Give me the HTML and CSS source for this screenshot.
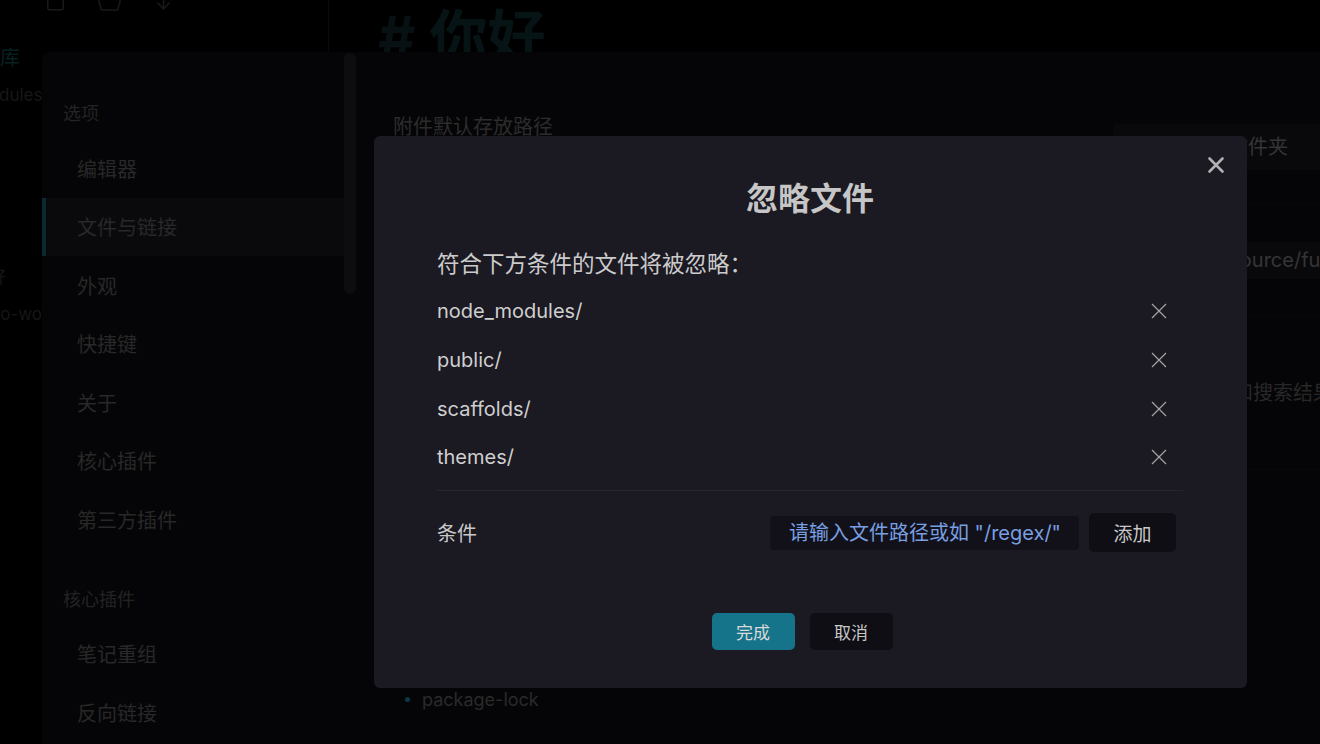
FILE: index.html
```html
<!DOCTYPE html>
<html lang="zh-CN">
<head>
<meta charset="utf-8">
<title>忽略文件</title>
<link rel="stylesheet" href="styles.css">
</head>
<body>
<div class="app">
  <aside class="explorer">
    <div class="ribbon-icons">
      <span class="ribbon-icon"><svg width="17" height="22" viewBox="0 0 17 22"><rect x="0.75" y="0.75" width="15.5" height="20" rx="1.5" fill="none" stroke="#1a1a1a" stroke-width="1.5"/></svg></span>
      <span class="ribbon-icon"><svg width="23" height="22" viewBox="0 0 23 22"><path d="M1 1h21v12l-2.5 8H3.5L1 13z" fill="none" stroke="#1a1a1a" stroke-width="1.5" stroke-linejoin="round"/></svg></span>
      <span class="ribbon-icon"><svg width="15" height="22" viewBox="0 0 15 22"><path d="M7.5 1v19M2 14l5.5 6 5.5-6" fill="none" stroke="#1a1a1a" stroke-width="1.5" stroke-linecap="round" stroke-linejoin="round"/></svg></span>
    </div>
    <div class="tree">
      <div class="vault">知识库</div>
      <div class="tree-item">node_modules</div>
      <div class="tree-item">public</div>
      <div class="tree-item">scaffolds</div>
      <div class="tree-item">source</div>
      <div class="tree-item depth-1">_drafts</div>
      <div class="tree-item depth-2">你好</div>
      <div class="tree-item depth-2">hello-world</div>
    </div>
  </aside>
  <main class="editor">
    <h1 class="note-title"><span class="hash">#</span> 你好</h1>
  </main>
</div>

<div class="settings">
  <div class="settings-nav-wrap">
    <nav class="settings-nav">
      <div class="nav-header">选项</div>
      <div class="nav-item">编辑器</div>
      <div class="nav-item active">文件与链接</div>
      <div class="nav-item">外观</div>
      <div class="nav-item">快捷键</div>
      <div class="nav-item">关于</div>
      <div class="nav-item">核心插件</div>
      <div class="nav-item">第三方插件</div>
      <div class="nav-header">核心插件</div>
      <div class="nav-item">笔记重组</div>
      <div class="nav-item">反向链接</div>
    </nav>
    <div class="nav-scroll"><div class="nav-thumb"></div></div>
  </div>
  <section class="settings-content">
    <div class="setting-item first">
      <div class="setting-info">
        <div class="setting-name">附件默认存放路径</div>
        <div class="setting-desc">新添加的附件存放的位置。</div>
        <div class="setting-desc">附件文件夹路径。</div>
      </div>
      <div class="setting-control"><div class="dropdown">指定的附件文件夹</div></div>
    </div>
    <div class="setting-item">
      <div class="setting-info">
        <div class="setting-name">附件文件夹路径</div>
        <div class="setting-desc">放置附件的位置。</div>
        <div class="setting-desc">请输入路径。</div>
      </div>
      <div class="setting-control"><div class="text-field">blog/hexo/source/fu</div></div>
    </div>
    <div class="setting-item">
      <div class="setting-info">
        <div class="setting-name">已忽略的文件</div>
        <div class="setting-desc">被忽略的文件不会出现在快速切换</div>
        <div class="setting-desc">关系图谱和反向链接中</div>
        <div class="setting-desc">也不会出现在搜索结果里</div>
        <div class="setting-desc">以及未链接提及中。</div>
      </div>
      <div class="setting-control"><div class="control-text">将在关系图谱和搜索结果中隐藏</div></div>
    </div>
    <div class="setting-item block">
      <div class="setting-name">排除的文件</div>
      <div class="setting-desc">以下文件已被排除。</div>
      <ul class="excluded-list">
        <li>node_modules</li>
        <li>public</li>
        <li>scaffolds</li>
        <li>themes</li>
        <li>package-lock</li>
      </ul>
    </div>
  </section>
</div>

<div class="modal">
  <button class="modal-close" aria-label="关闭"><svg width="18" height="18" viewBox="0 0 18 18"><path d="M2.5 2.5L15.5 15.5M15.5 2.5L2.5 15.5" stroke="#b2b2b2" stroke-width="2.6" stroke-linecap="round"/></svg></button>
  <h2 class="modal-title">忽略文件</h2>
  <p class="modal-desc">符合下方条件的文件将被忽略：</p>
  <ul class="filter-list">
    <li><span>node_modules/</span><button class="remove"><svg width="16" height="16" viewBox="0 0 16 16"><path d="M1 1L15 15M15 1L1 15" stroke="#a2a2a2" stroke-width="1.3"/></svg></button></li>
    <li><span>public/</span><button class="remove"><svg width="16" height="16" viewBox="0 0 16 16"><path d="M1 1L15 15M15 1L1 15" stroke="#a2a2a2" stroke-width="1.3"/></svg></button></li>
    <li><span>scaffolds/</span><button class="remove"><svg width="16" height="16" viewBox="0 0 16 16"><path d="M1 1L15 15M15 1L1 15" stroke="#a2a2a2" stroke-width="1.3"/></svg></button></li>
    <li><span>themes/</span><button class="remove"><svg width="16" height="16" viewBox="0 0 16 16"><path d="M1 1L15 15M15 1L1 15" stroke="#a2a2a2" stroke-width="1.3"/></svg></button></li>
  </ul>
  <div class="modal-setting">
    <div class="modal-setting-name">条件</div>
    <div class="modal-setting-control">
      <input class="filter-input" type="text" placeholder="请输入文件路径或如 &quot;/regex/&quot; 的正则表达式">
      <button class="btn">添加</button>
    </div>
  </div>
  <div class="modal-buttons">
    <button class="btn btn-cta">完成</button>
    <button class="btn">取消</button>
  </div>
</div>
</body>
</html>
```

FILE: styles.css
```css
* { box-sizing: border-box; }
html, body { margin: 0; padding: 0; }
body {
  width: 1320px;
  height: 744px;
  overflow: hidden;
  position: relative;
  background: #000;
  font-family: Inter, "Noto Sans CJK SC", sans-serif;
}

/* background workspace */
.app { display: flex; height: 744px; overflow: hidden; }
.explorer { width: 329px; flex: none; border-right: 1px solid #0a0a0a; overflow: hidden; }
.ribbon-icons { display: flex; align-items: flex-end; height: 12px; padding-left: 28px; overflow: hidden; }
.ribbon-icon { width: 54px; display: flex; justify-content: center; }
.ribbon-icon svg { display: block; margin-bottom: 1px; }
.tree { margin-left: -75px; padding-top: 28px; white-space: nowrap; }
.vault { height: 36.5px; line-height: 36.5px; padding-left: 35px; font-size: 20px; color: #082022; }
.tree-item { height: 36.5px; line-height: 36.5px; font-size: 17px; color: #171717; }
.tree-item.depth-1 { padding-left: 19px; }
.tree-item.depth-2 { padding-left: 47px; }

.editor { flex: 1; }
.note-title {
  margin: 0;
  padding: 5px 0 0 49px;
  font-size: 58px;
  line-height: 64px;
  font-weight: 700;
  color: #071415;
}
.note-title .hash { color: #071012; }

/* settings panel (behind overlay) */
.settings {
  position: absolute;
  left: 42px;
  top: 52px;
  width: 1368px;
  height: 760px;
  background: #050507;
  border-radius: 8px;
  display: flex;
}
.settings-nav-wrap { display: flex; width: 314px; flex: none; }
.settings-nav { width: 302px; padding-top: 11px; }
.nav-header { padding: 40px 0 14px 21px; font-size: 18px; line-height: 22px; color: #232323; }
.nav-item { height: 58.5px; display: flex; align-items: center; padding-left: 35px; font-size: 20px; color: #282828; }
.nav-item.active { background: #0a0a0d; box-shadow: inset 4px 0 0 #0a2a31; }
.nav-scroll { width: 12px; padding-top: 1px; }
.nav-thumb { height: 241px; border-radius: 6px; background: #0d0d10; }

.settings-content { flex: 1; padding: 39px 37px 0 37px; }
.setting-item { display: flex; align-items: center; padding: 22px 0; border-top: 1px solid #08080a; }
.setting-item.first { border-top: none; }
.setting-item.block { display: block; }
.setting-info { flex: 1; }
.setting-name { font-size: 20px; line-height: 28px; color: #2c2c2c; }
.setting-desc { font-size: 15px; line-height: 20px; color: #1c1c1c; }
.setting-control { width: 260px; flex: none; }
.dropdown { height: 46px; line-height: 46px; padding-left: 15px; border-radius: 4px; background: #09090c; font-size: 20px; color: #353535; white-space: nowrap; overflow: hidden; }
.text-field { height: 37px; line-height: 37px; padding-left: 15px; border-radius: 4px; background: #09090c; font-size: 20px; color: #353535; white-space: nowrap; overflow: hidden; }
.control-text { font-size: 20px; line-height: 28px; color: #282828; white-space: nowrap; }
.excluded-list { list-style: none; margin: 24px 0 0; padding: 0; }
.excluded-list li { display: flex; align-items: center; height: 30px; font-size: 18px; color: #2a2a2a; }
.excluded-list li::before { content: ""; width: 5px; height: 5px; border-radius: 50%; background: #0b3a44; margin: 0 12px 0 12px; }

/* ignore-files modal */
.modal {
  position: absolute;
  left: 374px;
  top: 136px;
  width: 873px;
  height: 552px;
  padding: 43px 64px 37px 63px;
  background: #1b1922;
  border-radius: 6px;
  color: #cccccc;
}
.modal-close {
  position: absolute;
  top: 20px;
  right: 22px;
  width: 18px;
  height: 18px;
  padding: 0;
  border: none;
  background: none;
}
.modal-close svg { display: block; }
.modal-title { margin: 0; text-align: center; font-size: 32px; line-height: 40px; font-weight: 700; color: #c6c6c6; }
.modal-desc { margin: 30px 0 0; font-size: 22.5px; line-height: 30px; color: #cbcbcb; }
.filter-list { list-style: none; margin: 8px 0 0; padding: 0; }
.filter-list li { display: flex; align-items: center; justify-content: space-between; height: 48.67px; font-size: 20px; color: #cfcfcf; }
.remove { width: 16px; height: 16px; padding: 0; margin-right: 16px; border: none; background: none; }
.remove svg { display: block; }
.modal-setting {
  display: flex;
  align-items: center;
  justify-content: space-between;
  height: 85px;
  margin-top: 8px;
  border-top: 1px solid #242733;
}
.modal-setting-name { font-size: 20px; color: #c8c8c8; }
.modal-setting-control { display: flex; align-items: center; gap: 10px; margin-right: 7px; }
.filter-input {
  width: 309px;
  height: 34px;
  padding: 0 19px;
  border: none;
  border-radius: 4px;
  background: #121119;
  font-family: Inter, "Noto Sans CJK SC", sans-serif;
  font-size: 20px;
  color: #d0d0d0;
  outline: none;
}
.filter-input::placeholder { color: #789fe2; }
.btn {
  width: 87px;
  height: 39px;
  border: none;
  border-radius: 5px;
  background: #0f0e14;
  font-family: Inter, "Noto Sans CJK SC", sans-serif;
  font-size: 19px;
  color: #c8c8c8;
  padding: 0;
}
.modal-buttons { display: flex; justify-content: center; gap: 15px; margin-top: 38px; padding-right: 16px; }
.modal-buttons .btn { width: 83px; height: 37px; font-size: 17px; }
.modal-buttons .btn-cta { background: #16748a; color: #dadada; }
```
